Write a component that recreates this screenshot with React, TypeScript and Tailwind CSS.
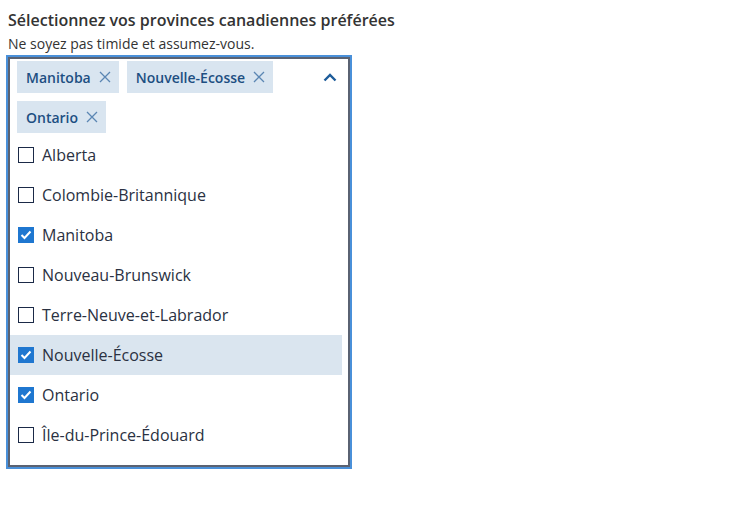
import { useState } from "react";

const provinces = [
  "Alberta",
  "Colombie-Britannique",
  "Manitoba",
  "Nouveau-Brunswick",
  "Terre-Neuve-et-Labrador",
  "Nouvelle-Écosse",
  "Ontario",
  "Île-du-Prince-Édouard",
];

function CloseIcon() {
  return (
    <svg width="12" height="12" viewBox="0 0 12 12" fill="none" stroke="#5b86b3" strokeWidth="1.3">
      <path d="M1 1l10 10M11 1L1 11" />
    </svg>
  );
}

function Check() {
  return (
    <svg width="12" height="10" viewBox="0 0 12 10" fill="none" stroke="white" strokeWidth="2">
      <path d="M1.5 5l3 3 6-6.5" />
    </svg>
  );
}

export default function App() {
  const [selected, setSelected] = useState<string[]>(["Manitoba", "Nouvelle-Écosse", "Ontario"]);
  const hovered = "Nouvelle-Écosse";

  const toggle = (p: string) => {
    setSelected((s) => (s.includes(p) ? s.filter((x) => x !== p) : [...s, p]));
  };

  return (
    <div className="min-h-screen bg-white px-[6px] pt-[8px] text-[#333] font-['Open_Sans',sans-serif]">
      <div className="pl-[2px] text-[16px] font-semibold leading-[24px] text-[#333]">
        Sélectionnez vos provinces canadiennes préférées
      </div>
      <div className="pl-[2px] pt-[3px] text-[14px] leading-[18px] text-[#333]">Ne soyez pas timide et assumez-vous.</div>
      <div className="mt-[2px] w-[346px] border-2 border-[#4a90d9]">
        <div className="border-2 border-[#5a6272] pb-[10px]">
          <div className="flex items-start pl-[7px] pt-[2px] pr-[6px]">
            <div className="flex flex-1 flex-wrap gap-[8px]">
              {provinces
                .filter((p) => selected.includes(p))
                .map((p) => (
                  <button
                    key={p}
                    onClick={() => toggle(p)}
                    className="flex h-[32px] items-center gap-[8px] bg-[#d9e5f0] pl-[9px] pr-[8px] text-[14px] font-semibold text-[#1d4f82]"
                  >
                    {p}
                    <CloseIcon />
                  </button>
                ))}
            </div>
            <div className="flex h-[32px] w-[24px] items-center justify-center">
              <svg width="14" height="9" viewBox="0 0 14 9" fill="none" stroke="#1d5c9a" strokeWidth="2.4">
                <path d="M1.5 7.5L7 2l5.5 5.5" />
              </svg>
            </div>
          </div>
          <div className="mt-[2px] pr-[6px]">
            {provinces.map((p) => {
              const on = selected.includes(p);
              return (
                <div
                  key={p}
                  onClick={() => toggle(p)}
                  className={`flex h-[40px] cursor-pointer items-center gap-[8px] pl-[8px] ${p === hovered ? "bg-[#dae5ef]" : ""}`}
                >
                  {on ? (
                    <span className="flex h-[16px] w-[16px] items-center justify-center bg-[#1f77d0]">
                      <Check />
                    </span>
                  ) : (
                    <span className="h-[16px] w-[16px] border-[1.5px] border-[#1b2a47] bg-white" />
                  )}
                  <span className="text-[16px] text-[#2a3142]">{p}</span>
                </div>
              );
            })}
          </div>
        </div>
      </div>
    </div>
  );
}
